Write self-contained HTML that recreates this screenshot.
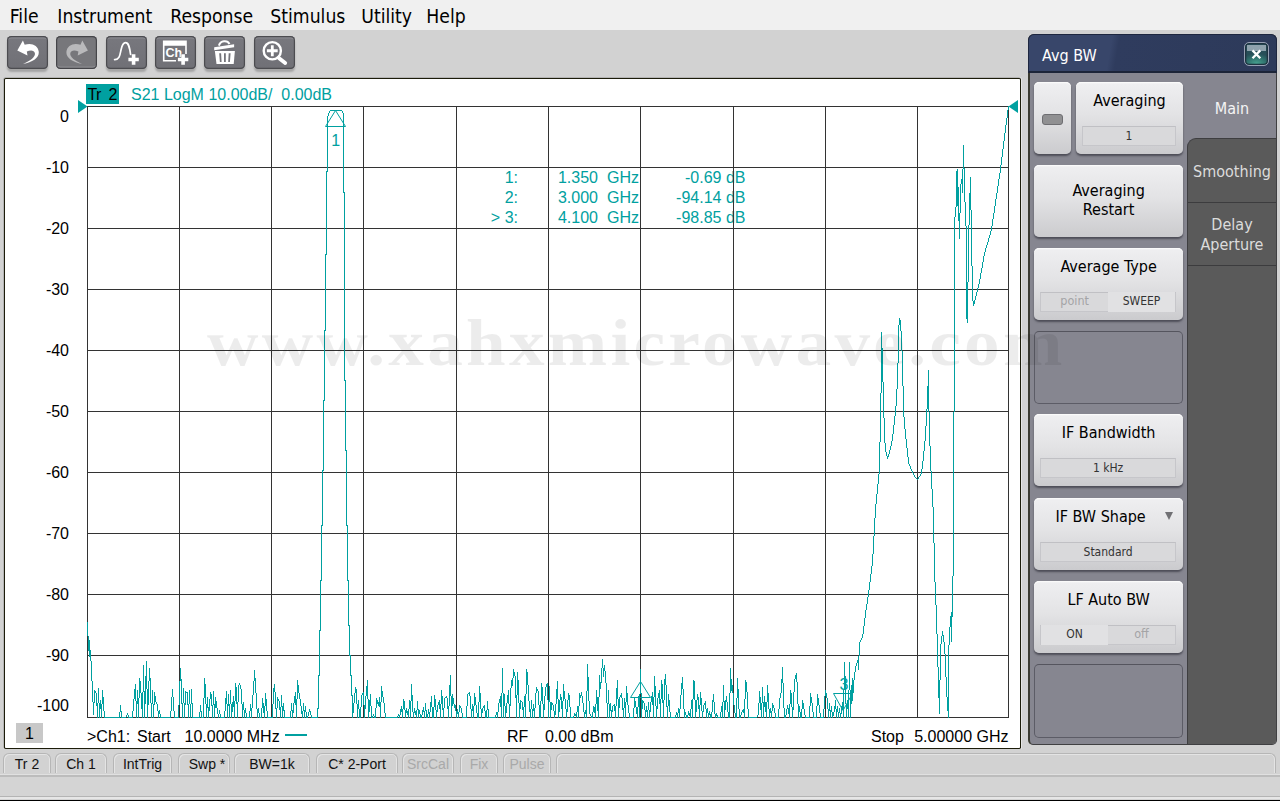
<!DOCTYPE html>
<html><head><meta charset="utf-8"><title>Network Analyzer</title>
<style>
*{box-sizing:border-box;margin:0;padding:0}
html,body{width:1280px;height:801px;overflow:hidden;background:#d2d2d2;font-family:"DejaVu Sans","Liberation Sans",sans-serif}
#menubar{position:absolute;left:0;top:0;width:1280px;height:30px;background:#f0f0f0}
#menubar span{position:absolute;top:4.6px;margin-left:0.8px;font-family:"DejaVu Sans Condensed","DejaVu Sans",sans-serif;font-size:19.2px;line-height:24px;color:#000;white-space:nowrap}
#toolbar{position:absolute;left:0;top:30px;width:1280px;height:47px;background:#d2d2d2}
.tb{position:absolute;top:5.6px;width:41px;height:33.4px;border-radius:4.5px;background:linear-gradient(#78787e,#707076);box-shadow:inset 0 0 0 1.2px #4c4c50,inset 0 2.4px 0 0 #8a8a90,0 3px 2px rgba(0,0,0,.22)}
.tb.dis{background:#77777b;box-shadow:inset 0 0 0 1.2px #454549,inset 0 -2.4px 0 0 #8e8e92}
.tb svg{position:absolute;left:0;top:0}
#plotwin{position:absolute;left:4px;top:78px;width:1017px;height:671px;background:#fff;border:1px solid #222;border-top:2px solid #222}
#plotsvg{position:absolute;left:0;top:0}
.ax{font-family:"Liberation Sans",sans-serif;font-size:16px;fill:#000}
.tc{font-family:"Liberation Sans",sans-serif;font-size:16px;fill:#00a0a0}

#panel{position:absolute;left:1028px;top:34px;width:1249px;height:710px}
#pbody{position:absolute;left:1028px;top:34px;width:249px;height:711px;background:#868690;border:1.4px solid #404042;border-left:2px solid #3a3a30;border-radius:6px 6px 5px 5px}
#phead{position:absolute;left:1028px;top:34px;width:249px;height:39px;background:linear-gradient(100deg,#38466a 0%,#38466a 33%,#2f3c5e 36%,#2d3a5a 100%);border:1px solid #1e2740;border-radius:6px 6px 0 0;border-bottom:2px solid #1c2438}
#phead span{position:absolute;left:13px;top:10.5px;font-family:"DejaVu Sans Condensed","DejaVu Sans",sans-serif;font-size:16px;color:#fff}
#pclose{position:absolute;left:1244px;top:42px;width:25px;height:24.4px;border-radius:5px;border:1.2px solid #97a0b4;background:radial-gradient(ellipse 70% 45% at 50% 92%,#46a08e 0%,#2f6f6c 60%,#274e58 100%);box-shadow:inset 0 0 0 1.3px #1e3340}
#pclose i{position:absolute;left:2.3px;top:2.3px;width:18.4px;height:5.6px;background:#8fa2ad}
#tabs{position:absolute;left:1187px;top:138px;width:88.6px;height:605.6px;background:#5a5a5a;border-bottom-right-radius:4px;border-top-left-radius:9px;border:1px solid #3e3e40;border-right:none;border-bottom:none}
.tabdiv{position:absolute;left:1188px;width:88px;height:1px;background:#3c3c3e}
.tabt{position:absolute;left:1188px;width:88px;text-align:center;font-family:"DejaVu Sans Condensed","DejaVu Sans",sans-serif;font-size:16px;line-height:19.5px;color:#dcdcdc}
.sk{position:absolute;left:1034.2px;width:148.8px;height:72px;border-radius:5px;background:linear-gradient(#efeff1 0%,#e3e3e5 45%,#cbcbce 100%);box-shadow:inset 0 1.2px 0 #fafafa,0 2px 2px rgba(40,40,50,.6);font-family:"DejaVu Sans Condensed","DejaVu Sans",sans-serif;font-size:16px;color:#000;text-align:center}
.sk .t{position:absolute;left:0;right:0;top:9.3px;line-height:19px}
.sk .v{position:absolute;left:6px;right:7px;top:44px;height:20px;background:#d9d9db;border:1px solid #c6c6ca;border-top-color:#c0c0c4;font-size:12px;line-height:18px;color:#333;box-shadow:inset 0 1px 0 rgba(255,255,255,.0)}
.sk.empty{background:#868690;box-shadow:none;border:1px solid #5c5c66;border-top-color:#55555e}


#status{position:absolute;left:0;top:749px;width:1280px;height:52px;background:#d2d2d2}
.sc{position:absolute;top:4px;height:20px;border:1px solid #b6b6b6;border-bottom:none;border-radius:6px 6px 0 0;box-shadow:inset 1px 1px 0 #e4e4e4,inset -1px 0 0 #e4e4e4;font-family:"Liberation Sans",sans-serif;font-size:14px;line-height:21px;text-align:center;color:#111;white-space:nowrap}
.sc.dis{color:#a9a9a9}
#wm{position:absolute;left:207px;top:308px;font-family:"Liberation Serif",serif;font-weight:bold;font-size:66px;line-height:70px;letter-spacing:3px;color:rgba(0,0,0,.075);white-space:nowrap;transform-origin:0 0;transform:scaleX(1.08);pointer-events:none}
</style></head><body>
<div id="menubar">
<span style="left:9px">File</span><span style="left:56.5px">Instrument</span><span style="left:169.5px">Response</span><span style="left:269.5px">Stimulus</span><span style="left:360.5px">Utility</span><span style="left:425.5px">Help</span>
</div>
<div id="toolbar">
<div class="tb" style="left:7px"><svg width="41" height="33" viewBox="0 0 41 33"><path d="M10.3,14.4 L15.9,4.6 L17.7,8.8 C24,6.3 31.2,9 31.8,16 C32.2,22 25,26.5 16.1,27.9 C23,25 28.6,21 27.9,17.2 C27.2,13.6 23,14 19.8,15.4 L20.5,19.5 Z" fill="#fff"/></svg></div>
<div class="tb dis" style="left:56.3px"><svg width="41" height="33" viewBox="0 0 41 33"><path transform="translate(42.2,0) scale(-1,1)" d="M10.3,14.4 L15.9,4.6 L17.7,8.8 C24,6.3 31.2,9 31.8,16 C32.2,22 25,26.5 16.1,27.9 C23,25 28.6,21 27.9,17.2 C27.2,13.6 23,14 19.8,15.4 L20.5,19.5 Z" fill="#b9b9bb"/></svg></div>
<div class="tb" style="left:105.7px"><svg width="41" height="33" viewBox="0 0 41 33"><path d="M8.6,23.6 C13.5,23.8 14,19 15,14 C16,9 17,6.6 19.6,6.6 C22.4,6.6 23.4,10 24.6,18.5" fill="none" stroke="#fff" stroke-width="1.7" stroke-linecap="round"/><path d="M22.4,21.7h3.4v-3.4h3.6v3.4h3.4v3.6h-3.4v3.4h-3.6v-3.4h-3.4z" fill="#fff"/></svg></div>
<div class="tb" style="left:155px"><svg width="41" height="33" viewBox="0 0 41 33"><path d="M7.9,4.4h23.9v13.5h-1.6v-8.2h-20.7v14.3h11.5v1.5h-13.1z" fill="#fff"/><text x="10.4" y="21.2" font-family="Liberation Sans, sans-serif" font-weight="bold" font-size="12.6" fill="#fff" textLength="16.6" lengthAdjust="spacingAndGlyphs">Ch</text><path d="M22.9,21.7h3.4v-3.4h3.6v3.4h3.4v3.6h-3.4v3.4h-3.6v-3.4h-3.4z" fill="#fff" stroke="#74747a" stroke-width="0.8" paint-order="stroke"/></svg></div>
<div class="tb" style="left:204.3px"><svg width="41" height="33" viewBox="0 0 41 33"><path d="M10.9,15.1h20l-1.2,12.9h-17.2z" fill="#fff"/><path d="M15.2,17.2h1.9l0.5,8.7h-1.7z M20,17.2h1.8v8.7h-1.8z M24.7,17.2h1.9l-0.7,8.7h-1.7z" fill="#74747a"/><path d="M10.2,11.3l19.9,-3.1v3l-19.9,3.1z" fill="#fff"/><path d="M14.9,9.6 C16.5,4.2 23.5,3.8 25.5,8" fill="none" stroke="#fff" stroke-width="2"/></svg></div>
<div class="tb" style="left:253.6px"><svg width="41" height="33" viewBox="0 0 41 33"><circle cx="18.3" cy="14.75" r="8.6" fill="none" stroke="#fff" stroke-width="2.4"/><path d="M12.9,13.35h4v-4h2.8v4h4v2.8h-4v4h-2.8v-4h-4z" fill="#fff"/><path d="M24.8,21.9L31.2,27" stroke="#fff" stroke-width="3.8" stroke-linecap="round"/></svg></div>
</div>
<svg id="plotsvg" width="1280" height="801" viewBox="0 0 1280 801">
<rect x="3" y="77" width="1019" height="673" rx="2.5" fill="#e6e6e6"/>
<rect x="3" y="77" width="1018" height="672" rx="2.5" fill="#b4b4b4"/>
<rect x="4" y="78" width="1017" height="671" rx="1.8" fill="#1c1c0a"/>
<rect x="5" y="79" width="1015" height="669" rx="0.8" fill="#fff"/>
<!-- marker readout -->
<g class="tc">
<text x="518" y="183" text-anchor="end">1:</text>
<text x="518" y="203" text-anchor="end">2:</text>
<text x="518" y="223" text-anchor="end">&gt; 3:</text>
<text x="598" y="183" text-anchor="end">1.350</text>
<text x="598" y="203" text-anchor="end">3.000</text>
<text x="598" y="223" text-anchor="end">4.100</text>
<text x="607" y="183">GHz</text>
<text x="607" y="203">GHz</text>
<text x="607" y="223">GHz</text>
<text x="745.5" y="183" text-anchor="end">-0.69 dB</text>
<text x="745.5" y="203" text-anchor="end">-94.14 dB</text>
<text x="745.5" y="223" text-anchor="end">-98.85 dB</text>
</g>
<rect x="87" y="106" width="1" height="612" fill="#333"/>
<rect x="179" y="106" width="1" height="612" fill="#333"/>
<rect x="271" y="106" width="1" height="612" fill="#333"/>
<rect x="363" y="106" width="1" height="612" fill="#333"/>
<rect x="456" y="106" width="1" height="612" fill="#333"/>
<rect x="548" y="106" width="1" height="612" fill="#333"/>
<rect x="640" y="106" width="1" height="612" fill="#333"/>
<rect x="733" y="106" width="1" height="612" fill="#333"/>
<rect x="825" y="106" width="1" height="612" fill="#333"/>
<rect x="917" y="106" width="1" height="612" fill="#333"/>
<rect x="1008" y="106" width="1" height="612" fill="#333"/>
<rect x="87" y="106" width="922" height="1" fill="#333"/>
<rect x="87" y="167" width="922" height="1" fill="#333"/>
<rect x="87" y="228" width="922" height="1" fill="#333"/>
<rect x="87" y="289" width="922" height="1" fill="#333"/>
<rect x="87" y="350" width="922" height="1" fill="#333"/>
<rect x="87" y="411" width="922" height="1" fill="#333"/>
<rect x="87" y="472" width="922" height="1" fill="#333"/>
<rect x="87" y="533" width="922" height="1" fill="#333"/>
<rect x="87" y="594" width="922" height="1" fill="#333"/>
<rect x="87" y="655" width="922" height="1" fill="#333"/>
<rect x="87" y="717" width="922" height="1" fill="#333"/>
<text class="ax" x="69" y="122" text-anchor="end">0</text>
<text class="ax" x="69" y="173" text-anchor="end">-10</text>
<text class="ax" x="69" y="234" text-anchor="end">-20</text>
<text class="ax" x="69" y="295" text-anchor="end">-30</text>
<text class="ax" x="69" y="356" text-anchor="end">-40</text>
<text class="ax" x="69" y="417" text-anchor="end">-50</text>
<text class="ax" x="69" y="478" text-anchor="end">-60</text>
<text class="ax" x="69" y="539" text-anchor="end">-70</text>
<text class="ax" x="69" y="600" text-anchor="end">-80</text>
<text class="ax" x="69" y="661" text-anchor="end">-90</text>
<text class="ax" x="69" y="711" text-anchor="end">-100</text>
<path d="M330,110.5H342M956,187.5H959M956,188.5H959M956,189.5H959M956,190.5H959M956,191.5H959M956,192.5H959M956,193.5H959M956,194.5H959M956,195.5H959M956,196.5H959M956,197.5H959M956,198.5H959M956,199.5H959M956,200.5H959M956,201.5H959M956,202.5H959M956,203.5H959M956,204.5H959M956,205.5H959M950,616.5H953M88,650.5H91M599,682.5H602M730,685.5H733M851,685.5H854M730,686.5H733M851,686.5H854M730,687.5H733M851,687.5H854M730,688.5H733M851,688.5H854M730,689.5H733M851,689.5H854M730,690.5H733M850,690.5H854M143,691.5H146M850,691.5H854M185,692.5H188M850,692.5H854M850,693.5H853M850,694.5H853M579,695.5H582M850,695.5H853M850,696.5H853M596,697.5H599M651,697.5H654M850,697.5H853M451,698.5H454M596,698.5H599M651,698.5H654M850,698.5H853M294,699.5H297M451,699.5H454M499,699.5H502M596,699.5H599M651,699.5H654M850,699.5H853M294,700.5H297M368,700.5H371M451,700.5H454M499,700.5H502M596,700.5H599M651,700.5H654M850,700.5H853M136,701.5H139M294,701.5H297M368,701.5H371M451,701.5H454M499,701.5H502M596,701.5H599M641,701.5H644M651,701.5H654M723,701.5H727M136,702.5H139M232,702.5H235M294,702.5H297M368,702.5H371M376,702.5H381M451,702.5H454M499,702.5H502M596,702.5H599M641,702.5H644M762,702.5H767M136,703.5H139M232,703.5H235M368,703.5H371M376,703.5H381M451,703.5H454M550,703.5H553M596,703.5H599M763,703.5H767M99,704.5H102M213,704.5H217M227,704.5H230M231,704.5H235M368,704.5H371M378,704.5H381M438,704.5H441M550,704.5H553M763,704.5H767M846,704.5H849M99,705.5H102M214,705.5H217M227,705.5H230M231,705.5H235M368,705.5H371M378,705.5H381M763,705.5H767M846,705.5H849M99,706.5H102M214,706.5H217M231,706.5H235M262,706.5H265M281,706.5H284M763,706.5H767M841,706.5H844M846,706.5H849M99,707.5H102M206,707.5H210M214,707.5H217M262,707.5H265M593,707.5H596M841,707.5H844M846,707.5H849M99,708.5H102M593,708.5H596M787,708.5H790M841,708.5H844M846,708.5H849M400,709.5H403M471,709.5H474M532,709.5H535M593,709.5H596M841,709.5H844M282,710.5H285M291,710.5H294M303,710.5H306M400,710.5H403M471,710.5H474M532,710.5H535M593,710.5H596M609,710.5H613M645,710.5H648M742,710.5H745M828,710.5H832M400,711.5H403M405,711.5H409M414,711.5H417M422,711.5H425M593,711.5H596M645,711.5H648M742,711.5H745M769,711.5H772M405,712.5H409M413,712.5H417M456,712.5H459M584,712.5H587M769,712.5H772M456,713.5H459M584,713.5H587M688,713.5H691M574,714.5H577M688,714.5H691M708,714.5H712M574,715.5H577M715,715.5H718M104,717.5H120M121,717.5H126M128,717.5H133M160,717.5H171M174,717.5H179M192,717.5H200M201,717.5H204M220,717.5H225M246,717.5H250M259,717.5H262M267,717.5H273M284,717.5H291M311,717.5H318M385,717.5H398M462,717.5H467M488,717.5H496M570,717.5H574M629,717.5H634M670,717.5H676M717,717.5H721M748,717.5H757M775,717.5H779M805,717.5H810M813,717.5H817M820,717.5H824M87.5,622V636M88.5,636V650M89.5,640V650M89.5,651V657M90.5,651V661M91.5,661V681M92.5,681V702M93.5,702V715M94.5,690V703M95.5,691V693M96.5,693V706M97.5,703V718M98.5,688V703M99.5,703V704M99.5,709V718M100.5,700V704M101.5,709V718M102.5,690V704M103.5,697V711M104.5,711V717M119.5,712V717M120.5,705V712M121.5,711V717M126.5,715V717M127.5,713V715M128.5,715V717M132.5,711V717M133.5,699V711M134.5,689V699M135.5,684V701M136.5,704V718M137.5,690V701M138.5,698V701M138.5,704V718M139.5,678V698M140.5,681V693M141.5,693V709M142.5,692V718M143.5,665V691M144.5,692V718M145.5,676V691M145.5,692V704M146.5,661V689M147.5,689V718M148.5,681V705M149.5,668V681M150.5,678V703M151.5,703V718M152.5,690V704M153.5,704V718M154.5,692V705M155.5,696V702M156.5,702V704M157.5,704V711M158.5,711V718M159.5,710V714M160.5,714V717M170.5,711V717M171.5,697V711M172.5,689V697M173.5,697V711M174.5,711V717M178.5,705V717M179.5,681V705M180.5,668V681M181.5,679V704M182.5,703V718M183.5,688V703M184.5,703V718M185.5,691V692M185.5,693V705M187.5,693V705M188.5,704V718M189.5,690V704M190.5,704V718M191.5,689V704M192.5,703V717M199.5,712V717M200.5,705V712M201.5,711V717M203.5,698V717M204.5,678V698M205.5,684V704M206.5,704V707M206.5,708V718M207.5,697V707M208.5,708V718M209.5,699V707M209.5,708V711M210.5,692V699M211.5,694V706M212.5,705V718M213.5,691V704M214.5,708V718M215.5,697V704M216.5,701V704M217.5,708V714M218.5,714V718M219.5,710V714M220.5,714V717M224.5,711V717M225.5,698V711M226.5,691V704M227.5,706V718M228.5,694V704M229.5,706V718M230.5,690V704M231.5,707V718M232.5,707V712M233.5,696V702M234.5,701V702M234.5,707V718M235.5,683V701M236.5,687V704M237.5,702V718M238.5,685V702M239.5,683V685M240.5,685V689M241.5,689V704M242.5,704V718M243.5,702V710M244.5,710V718M245.5,708V713M246.5,713V717M249.5,711V717M250.5,704V711M251.5,708V718M252.5,695V708M253.5,681V695M254.5,670V681M255.5,678V693M256.5,693V709M257.5,709V718M258.5,708V713M259.5,713V717M261.5,708V717M262.5,698V706M263.5,703V706M263.5,708V713M264.5,708V718M265.5,693V706M266.5,699V711M267.5,711V717M272.5,704V717M273.5,688V704M274.5,684V692M275.5,692V709M276.5,708V718M277.5,697V708M278.5,699V701M279.5,701V710M280.5,707V718M281.5,695V706M282.5,707V710M282.5,711V718M283.5,703V706M283.5,707V710M284.5,711V717M290.5,711V717M291.5,703V710M292.5,711V718M293.5,703V710M293.5,711V713M294.5,696V699M295.5,692V699M295.5,703V705M296.5,703V718M297.5,680V699M298.5,685V693M299.5,693V699M300.5,699V706M301.5,706V714M302.5,711V718M303.5,703V710M304.5,711V718M305.5,706V710M305.5,711V712M306.5,712V718M307.5,716V718M308.5,712V716M309.5,709V712M310.5,711V715M311.5,715V717M317.5,708V717M318.5,675V709M319.5,630V676M320.5,580V631M321.5,525V581M322.5,470V526M323.5,400V471M324.5,330V401M325.5,254V331M326.5,171V255M327.5,116V172M328.5,113V116M329.5,111V113M342.5,111V113M343.5,113V193M344.5,192V381M345.5,380V451M346.5,450V526M347.5,525V581M348.5,580V626M349.5,625V656M350.5,655V676M351.5,675V696M352.5,695V718M353.5,703V713M354.5,693V703M355.5,687V693M356.5,689V704M357.5,704V718M358.5,700V709M359.5,709V718M360.5,707V718M361.5,695V707M362.5,693V695M363.5,692V705M364.5,705V718M365.5,696V709M366.5,686V696M367.5,680V699M368.5,699V700M368.5,706V718M369.5,706V712M370.5,694V700M371.5,706V718M372.5,716V718M373.5,714V716M374.5,716V718M375.5,708V718M376.5,698V702M376.5,704V708M377.5,700V702M379.5,697V702M379.5,706V707M380.5,706V718M381.5,686V702M382.5,691V697M383.5,697V703M384.5,703V713M385.5,713V717M397.5,716V717M398.5,714V716M399.5,715V718M400.5,712V715M401.5,706V709M402.5,712V718M403.5,699V709M404.5,701V710M405.5,710V711M405.5,713V718M406.5,708V711M407.5,713V715M408.5,709V711M408.5,713V718M409.5,700V709M410.5,701V718M411.5,684V701M412.5,695V712M413.5,713V718M414.5,708V711M415.5,713V715M416.5,710V711M416.5,713V718M417.5,701V710M418.5,709V718M419.5,710V714M420.5,714V718M421.5,715V718M422.5,710V711M422.5,712V715M423.5,707V711M424.5,712V718M425.5,703V711M426.5,710V718M427.5,714V718M428.5,709V714M429.5,712V718M430.5,702V712M431.5,696V707M432.5,707V718M433.5,707V718M434.5,695V707M435.5,699V710M436.5,710V718M437.5,705V712M438.5,702V704M439.5,700V704M439.5,705V709M440.5,705V718M441.5,690V704M442.5,696V710M443.5,708V718M444.5,698V708M445.5,697V698M446.5,696V698M447.5,698V709M448.5,706V718M449.5,685V706M450.5,675V696M451.5,696V698M451.5,704V718M452.5,694V698M452.5,704V706M454.5,704V708M455.5,705V711M456.5,711V712M456.5,714V718M457.5,709V712M458.5,714V718M459.5,705V712M460.5,706V708M461.5,708V713M462.5,713V717M466.5,706V717M467.5,694V706M468.5,693V694M469.5,692V696M470.5,696V709M471.5,711V718M472.5,704V709M473.5,706V709M473.5,711V718M474.5,693V706M475.5,697V705M476.5,705V713M477.5,713V718M478.5,702V718M479.5,686V702M480.5,693V709M481.5,709V718M482.5,708V713M483.5,706V708M484.5,705V711M485.5,711V718M486.5,710V718M487.5,701V710M488.5,709V717M495.5,715V717M496.5,712V715M497.5,712V718M498.5,703V712M500.5,696V699M500.5,703V707M501.5,693V699M501.5,703V718M502.5,668V693M503.5,693V718M504.5,694V706M505.5,706V718M506.5,703V713M507.5,695V703M508.5,690V704M509.5,704V718M510.5,688V706M511.5,680V688M512.5,678V686M513.5,669V678M514.5,672V676M515.5,676V698M516.5,695V718M517.5,672V695M518.5,680V703M519.5,703V718M520.5,700V709M521.5,701V702M522.5,702V710M523.5,707V718M524.5,696V707M525.5,694V718M526.5,669V694M527.5,672V685M528.5,685V701M529.5,701V712M530.5,709V718M531.5,700V709M532.5,711V718M533.5,704V709M534.5,708V709M534.5,711V718M535.5,693V708M536.5,687V693M537.5,689V691M538.5,691V705M539.5,705V718M540.5,701V718M541.5,683V701M542.5,687V704M543.5,704V718M544.5,696V710M545.5,687V696M546.5,684V687M547.5,683V700M548.5,700V718M549.5,686V702M550.5,702V703M550.5,705V718M551.5,702V703M551.5,705V710M553.5,705V711M554.5,711V718M555.5,704V715M556.5,689V704M557.5,681V699M558.5,699V718M559.5,700V712M560.5,694V700M561.5,697V709M562.5,701V718M563.5,684V701M564.5,691V699M565.5,699V709M566.5,709V718M567.5,700V712M568.5,693V700M569.5,695V707M570.5,707V717M573.5,716V717M574.5,713V714M576.5,712V714M576.5,716V718M577.5,706V712M578.5,706V718M579.5,693V695M579.5,696V706M580.5,696V698M581.5,692V695M582.5,696V703M583.5,703V712M584.5,714V718M585.5,710V712M586.5,691V712M586.5,714V718M587.5,664V691M588.5,677V701M589.5,701V714M590.5,714V716M591.5,716V718M592.5,712V718M593.5,706V707M594.5,712V713M595.5,704V707M595.5,712V718M596.5,690V697M597.5,704V711M598.5,704V718M599.5,675V682M599.5,683V697M600.5,683V689M601.5,668V682M602.5,659V668M603.5,668V677M604.5,665V671M605.5,671V683M606.5,683V703M607.5,703V718M608.5,690V704M609.5,704V710M609.5,711V718M610.5,703V710M611.5,711V718M612.5,706V710M612.5,711V712M613.5,705V706M614.5,704V711M615.5,706V718M616.5,688V706M617.5,680V699M618.5,699V718M619.5,697V708M620.5,695V697M621.5,693V698M622.5,698V710M623.5,708V718M624.5,698V708M625.5,702V718M626.5,686V702M627.5,693V705M628.5,705V713M629.5,713V717M633.5,708V717M634.5,698V708M635.5,701V707M636.5,707V714M637.5,707V718M638.5,696V707M639.5,694V718M640.5,669V694M641.5,693V701M641.5,703V718M642.5,700V701M642.5,703V709M644.5,703V710M645.5,712V718M646.5,706V710M647.5,712V718M648.5,702V710M649.5,710V718M650.5,702V712M651.5,696V697M652.5,692V697M652.5,702V705M653.5,702V718M654.5,676V697M655.5,686V706M656.5,706V718M657.5,698V709M658.5,693V698M659.5,690V704M660.5,699V718M661.5,680V699M662.5,684V703M663.5,700V718M664.5,679V700M665.5,674V685M666.5,685V707M667.5,706V718M668.5,694V706M669.5,700V712M670.5,712V717M675.5,715V717M676.5,712V715M677.5,713V718M678.5,708V713M679.5,709V718M680.5,695V709M681.5,683V695M682.5,677V689M683.5,689V709M684.5,709V718M685.5,712V715M686.5,715V718M687.5,715V718M688.5,711V713M689.5,715V716M690.5,709V713M690.5,715V718M691.5,700V709M692.5,699V718M693.5,680V699M694.5,681V700M695.5,700V718M696.5,700V712M697.5,694V700M698.5,697V709M699.5,705V718M700.5,692V705M701.5,698V711M702.5,711V718M703.5,705V712M704.5,703V705M705.5,701V709M706.5,709V718M707.5,708V713M708.5,713V714M708.5,715V718M709.5,711V714M710.5,715V718M711.5,712V714M711.5,715V718M712.5,700V712M713.5,694V702M714.5,702V714M715.5,714V715M715.5,716V718M716.5,713V715M717.5,716V717M720.5,712V717M721.5,706V712M722.5,702V718M723.5,685V701M724.5,702V718M725.5,700V701M725.5,702V710M726.5,696V701M727.5,702V712M728.5,712V718M729.5,693V718M730.5,668V685M730.5,691V693M731.5,679V685M732.5,691V693M733.5,693V705M734.5,705V713M735.5,713V718M736.5,698V718M737.5,678V698M738.5,689V709M739.5,709V718M740.5,715V718M741.5,712V715M743.5,709V710M743.5,712V713M744.5,699V710M744.5,712V718M745.5,680V699M746.5,682V692M747.5,692V709M748.5,709V717M757.5,715V717M758.5,703V715M759.5,691V703M760.5,697V710M761.5,703V718M762.5,687V702M763.5,707V718M764.5,696V702M765.5,707V712M766.5,707V718M767.5,685V702M768.5,693V709M769.5,709V711M769.5,713V718M770.5,708V711M771.5,713V718M772.5,703V711M773.5,705V708M774.5,708V713M775.5,713V717M778.5,709V717M779.5,698V709M780.5,693V698M781.5,679V693M782.5,667V683M783.5,683V708M784.5,708V718M785.5,715V718M786.5,709V715M787.5,705V708M788.5,709V714M789.5,704V708M789.5,709V718M790.5,690V704M791.5,693V707M792.5,707V718M793.5,692V710M794.5,679V692M795.5,675V679M796.5,673V682M797.5,682V704M798.5,704V718M799.5,706V712M800.5,712V718M801.5,709V718M802.5,700V709M803.5,703V709M804.5,709V715M805.5,715V717M809.5,706V717M810.5,693V706M811.5,697V703M812.5,703V712M813.5,712V717M816.5,706V717M817.5,694V706M818.5,698V705M819.5,705V713M820.5,713V717M823.5,709V717M824.5,696V709M825.5,690V696M826.5,693V698M827.5,698V709M828.5,709V710M828.5,711V718M829.5,703V710M830.5,711V718M831.5,706V710M831.5,711V712M832.5,712V718M833.5,712V716M834.5,706V712M835.5,700V709M836.5,709V718M837.5,706V712M838.5,712V718M839.5,708V713M840.5,713V718M841.5,710V714M842.5,702V706M843.5,690V706M843.5,710V718M844.5,662V690M845.5,676V704M846.5,709V718M847.5,700V704M848.5,690V704M848.5,709V718M849.5,662V690M850.5,701V718M851.5,701V704M852.5,678V685M853.5,680V685M854.5,672V680M855.5,666V672M856.5,663V666M857.5,660V663M858.5,656V670M859.5,642V656M860.5,640V642M861.5,638V640M862.5,634V638M863.5,626V634M864.5,618V626M865.5,610V618M866.5,604V610M867.5,597V604M868.5,590V597M869.5,582V590M870.5,574V582M871.5,566V574M872.5,554V566M873.5,536V554M874.5,518V536M875.5,504V518M876.5,494V504M877.5,484V494M878.5,474V484M879.5,442V474M880.5,393V442M881.5,332V393M882.5,348V382M883.5,382V418M884.5,418V443M885.5,443V452M886.5,452V456M887.5,456V459M888.5,454V457M889.5,450V454M890.5,446V450M891.5,441V446M892.5,434V441M893.5,425V434M894.5,416V425M895.5,406V416M896.5,389V406M897.5,363V389M898.5,325V363M899.5,318V325M900.5,320V331M901.5,331V351M902.5,351V386M903.5,386V417M904.5,417V429M905.5,429V439M906.5,439V448M907.5,448V457M908.5,457V464M909.5,464V466M910.5,466V469M911.5,469V471M912.5,471V473M913.5,473V475M914.5,475V477M915.5,477V478M916.5,478V479M917.5,479V480M918.5,477V479M919.5,476V477M920.5,474V476M921.5,469V474M922.5,461V469M923.5,451V461M924.5,441V451M925.5,426V441M926.5,409V426M927.5,386V409M928.5,370V412M929.5,412V446M930.5,446V471M931.5,471V489M932.5,489V507M933.5,507V543M934.5,543V582M935.5,582V605M936.5,605V634M937.5,634V667M938.5,667V698M939.5,680V714M940.5,644V680M941.5,636V644M942.5,631V636M943.5,635V642M944.5,642V654M945.5,654V677M946.5,677V697M947.5,697V711M948.5,645V718M949.5,627V645M950.5,617V627M951.5,612V616M951.5,617V642M952.5,576V616M953.5,412V576M954.5,217V412M955.5,207V217M956.5,171V187M956.5,206V207M957.5,169V187M958.5,206V221M959.5,213V239M960.5,184V213M961.5,179V184M962.5,169V193M963.5,145V169M964.5,168V202M965.5,202V226M966.5,226V319M967.5,282V323M968.5,225V282M969.5,193V225M970.5,177V210M971.5,210V266M972.5,266V301M973.5,301V306M974.5,300V304M975.5,296V300M976.5,292V296M977.5,288V292M978.5,284V288M979.5,279V284M980.5,273V279M981.5,268V273M982.5,262V268M983.5,256V262M984.5,252V256M985.5,248V252M986.5,245V248M987.5,242V245M988.5,238V242M989.5,235V238M990.5,231V235M991.5,226V231M992.5,219V226M993.5,213V219M994.5,206V213M995.5,199V206M996.5,193V199M997.5,186V193M998.5,179V186M999.5,173V179M1000.5,165V173M1001.5,157V165M1002.5,149V157M1003.5,141V149M1004.5,133V141M1005.5,125V133M1006.5,118V125M1007.5,110V118M1008.5,106V110" fill="none" stroke="#00a0a0" stroke-width="1" shape-rendering="crispEdges"/>
<!-- trace header -->
<rect x="86" y="84" width="33" height="20" fill="#00a0a0"/>
<text class="ax" x="87.5" y="100" textLength="30" lengthAdjust="spacing" xml:space="preserve">Tr  2</text>
<text class="tc" x="131" y="100" xml:space="preserve">S21 LogM 10.00dB/  0.00dB</text>
<polygon points="78,100 87.5,106.5 78,113" fill="#00a0a0"/>
<polygon points="1018,100 1008.5,106.5 1018,113" fill="#00a0a0"/>
<!-- markers -->
<g fill="none" stroke="#00a0a0" stroke-width="1">
<polygon points="335.5,110.5 325.5,126.5 345.5,126.5"/>
<polygon points="640.5,681.5 630.5,697.5 650.5,697.5"/>
<polygon points="843,710.5 833.5,693.5 852.5,693.5"/>
</g>
<text class="tc" x="335.8" y="145.6" text-anchor="middle">1</text>
<text class="tc" x="844" y="690" text-anchor="middle">3</text>
<!-- bottom labels -->
<rect x="16" y="723" width="27" height="20" fill="#c8c8c8"/>
<text class="ax" x="29.5" y="739" text-anchor="middle">1</text>
<text class="ax" x="87" y="742">&gt;Ch1:</text><text class="ax" x="137" y="742">Start</text><text class="ax" x="184.5" y="742">10.0000 MHz</text>
<rect x="285" y="734" width="22" height="2" fill="#00a0a0"/>
<text class="ax" x="507" y="742">RF</text><text class="ax" x="545" y="742">0.00 dBm</text>
<text class="ax" x="871" y="742">Stop</text><text class="ax" x="1008.5" y="742" text-anchor="end">5.00000 GHz</text>

</svg>

<div id="pbody"></div>
<div id="phead"><span>Avg BW</span></div>
<div id="pclose"><i></i><svg width="23" height="23" viewBox="0 0 23 23" style="position:absolute;left:0;top:0"><path d="M7.5 7.4 L15.3 15.2 M15.3 7.4 L7.5 15.2" stroke="#fff" stroke-width="2.3" fill="none"/></svg></div>
<div id="tabs"></div>
<div class="tabdiv" style="top:202px"></div>
<div class="tabdiv" style="top:265px"></div>
<div class="tabt" style="top:98.5px;color:#f4f4f4">Main</div>
<div class="tabt" style="top:161.7px">Smoothing</div>
<div class="tabt" style="top:215px">Delay<br>Aperture</div>

<div class="sk" style="top:82px;width:37px"><div style="position:absolute;left:8px;top:32px;width:21px;height:11px;border-radius:3px;background:#909092;border:1px solid #6e6e72"></div></div>
<div class="sk" style="top:82px;left:1076px;width:107px"><div class="t">Averaging</div><div class="v">1</div></div>
<div class="sk" style="top:165px"><div class="t" style="top:16.4px">Averaging<br>Restart</div></div>
<div class="sk" style="top:248px"><div class="t">Average Type</div><div class="v"><span style="position:absolute;left:0;width:50%;color:#a4a4a6;font-size:12.5px;top:-1px">point</span><span style="position:absolute;left:50%;width:50%;top:-1px;bottom:-1px;background:#e1e1e3">SWEEP</span></div></div>
<div class="sk empty" style="top:331px;height:73px"></div>
<div class="sk" style="top:414px"><div class="t">IF Bandwidth</div><div class="v">1 kHz</div></div>
<div class="sk" style="top:498px"><div class="t" style="left:-16px">IF BW Shape</div><div style="position:absolute;left:131px;top:14px;width:0;height:0;border-left:4.5px solid transparent;border-right:4.5px solid transparent;border-top:8px solid #707074"></div><div class="v">Standard</div></div>
<div class="sk" style="top:581px"><div class="t">LF Auto BW</div><div class="v"><span style="position:absolute;left:0;width:50%;top:-1px;bottom:-1px;background:#e1e1e3">ON</span><span style="position:absolute;left:50%;width:50%;color:#a4a4a6;font-size:12.5px;top:-1px">off</span></div></div>
<div class="sk empty" style="top:663.5px;height:74px"></div>
<div id="status">
<div class="sc" style="left:3px;width:48px">Tr 2</div>
<div class="sc" style="left:55px;width:52px">Ch 1</div>
<div class="sc" style="left:113px;width:59px">IntTrig</div>
<div class="sc" style="left:178px;width:52px;padding-left:6px">Swp *</div>
<div class="sc" style="left:234px;width:76px">BW=1k</div>
<div class="sc" style="left:316px;width:82px">C* 2-Port</div>
<div class="sc dis" style="left:402px;width:52px">SrcCal</div>
<div class="sc dis" style="left:460px;width:38px">Fix</div>
<div class="sc dis" style="left:503px;width:48px">Pulse</div>
<div class="sc" style="left:556px;width:720px"></div>
<div style="position:absolute;left:0;top:25px;width:1280px;height:1px;background:#e0e0e0"></div>
<div style="position:absolute;left:0;top:26px;width:1280px;height:2px;background:#bcbcbc"></div>
<div style="position:absolute;left:0;top:28px;width:1280px;height:20px;background:#d4d4d4"></div>
<div style="position:absolute;left:0;top:47px;width:1280px;height:1px;background:#b4b4b4"></div>
<div style="position:absolute;left:0;top:48px;width:1280px;height:2px;background:#e6e6e6"></div>
<div style="position:absolute;left:0;top:50.6px;width:1280px;height:2px;background:#000"></div>
</div>
<div id="wm">www.xahxmicrowave.com</div>
</body></html>
